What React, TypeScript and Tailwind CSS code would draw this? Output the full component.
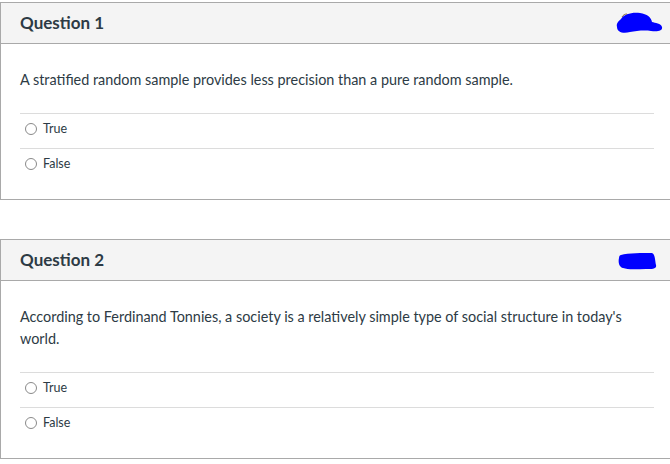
import React from "react";

const font = { fontFamily: "Lato, 'Open Sans', sans-serif" };

function Radio({ label }: { label: string }) {
  return (
    <div className="border-t border-[#dcdcdc] h-[35px] flex items-center pl-[5px] pb-[4px]">
      <span className="w-[12px] h-[12px] rounded-full border border-[#8a8a8a] bg-white" />
      <span className="ml-[6px] text-[12.5px] text-[#2d3b45] leading-none">{label}</span>
    </div>
  );
}

function Card({
  title,
  text,
  blob,
}: {
  title: string;
  text: React.ReactNode;
  blob: React.ReactNode;
}) {
  return (
    <div className="w-[680px] border-l border-t border-b border-[#a9a9a9] bg-white">
      <div className="h-[41px] bg-[#f4f4f4] border-b border-[#a9a9a9] flex items-center pl-[19px] relative">
        <span className="text-[17px] font-bold text-[#2d3b45]">{title}</span>
        {blob}
      </div>
      <div className="pl-[19px] pr-[36px] pt-[25px] pb-[16px]">
        <div className="text-[14.4px] leading-[22px] text-[#2d3b45] mb-[22px]">{text}</div>
        <div className="w-[634px]">
          <Radio label="True" />
          <Radio label="False" />
        </div>
      </div>
    </div>
  );
}

export default function App() {
  return (
    <div className="w-[670px] h-[464px] overflow-hidden bg-white pt-[2px]" style={font}>
      <Card
        title="Question 1"
        text="A stratified random sample provides less precision than a pure random sample."
        blob={
          <svg className="absolute left-[615px] top-[8px]" width="48" height="26" viewBox="0 0 48 26">
            <path d="M5 8 C8 3 16 1 24 2 C31 3 35 6 36 11 C39 12 45 12 46 16 C47 20 41 21 35 20 C28 19 20 20 14 21 C7 23 1 21 1 16 C0 12 3 10 5 8 Z" fill="#0000ff" />
            <path d="M6 6 C7 4 9 3 11 3" stroke="#8a6a3a" strokeWidth="1" fill="none" />
          </svg>
        }
      />
      <div className="h-[39px]" />
      <Card
        title="Question 2"
        text={
          <>
            According to Ferdinand Tonnies, a society is a relatively simple type of social structure in today's
            <br />
            world.
          </>
        }
        blob={
          <svg className="absolute left-[617px] top-[12px]" width="40" height="20" viewBox="0 0 40 20">
            <path d="M3 3 C10 1 25 1 34 1 C37 2 37 8 38 13 C39 17 34 17 28 17 C20 17 10 18 5 16 C1 15 0 10 1 6 C1 4 2 3 3 3 Z" fill="#0000ff" />
          </svg>
        }
      />
    </div>
  );
}
